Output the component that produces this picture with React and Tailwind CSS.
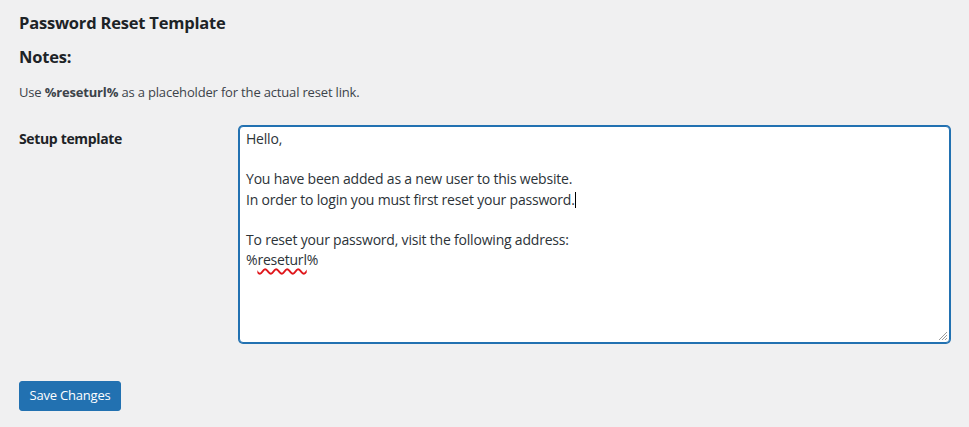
export default function App() {
  return (
    <div className="min-h-[427px] bg-[#f0f0f1] px-[19px] pt-[12px] font-['Open_Sans',sans-serif] text-[#3c434a]">
      <h2 className="text-[16.5px] leading-[22px] font-bold tracking-[-0.2px] text-[#1d2327]">Password Reset Template</h2>
      <h3 className="mt-[12px] text-[16.5px] leading-[22px] font-bold tracking-[-0.2px] text-[#1d2327]">Notes:</h3>
      <p className="mt-[14px] text-[13px] leading-[20px] tracking-[-0.17px]">
        Use <strong className="font-bold text-[#3c434a]">%reseturl%</strong> as a placeholder for the actual reset link.
      </p>

      <div className="mt-[24px] flex items-start">
        <div className="w-[220px] shrink-0 pt-[3px] text-[14px] leading-[20px] font-bold tracking-[-0.35px] text-[#1d2327]">
          Setup template
        </div>
        <div className="relative h-[217px] w-[711px] rounded-[4px] border border-[#2271b1] bg-white px-[6px] py-[2px] shadow-[0_0_0_1px_#2271b1]">
          <div className="whitespace-pre-wrap text-[14px] leading-[20px] tracking-[-0.2px] text-[#2c3338]">
            {'Hello,\n\nYou have been added as a new user to this website.\nIn order to login you must first reset your password.'}
            <span className="inline-block h-[16px] w-px translate-y-[3px] bg-black align-baseline" />
            {'\n\nTo reset your password, visit the following address:\n%'}
            <span className="underline decoration-wavy decoration-[#e0161b] decoration-[1.5px] underline-offset-[3px]">reseturl</span>
            {'%'}
          </div>
          <svg className="absolute bottom-[1px] right-[1px]" width="11" height="11" viewBox="0 0 11 11">
            <path d="M10 2 L2 10 M10 5 L5 10 M10 8 L8 10" stroke="#9a9a9a" strokeWidth="1" />
          </svg>
        </div>
      </div>

      <button
        type="button"
        className="mt-[38px] flex h-[30px] w-[102px] items-center justify-center rounded-[3px] border border-[#2271b1] bg-[#2271b1] text-[13px] tracking-[-0.2px] text-white"
      >
        Save Changes
      </button>
    </div>
  );
}
